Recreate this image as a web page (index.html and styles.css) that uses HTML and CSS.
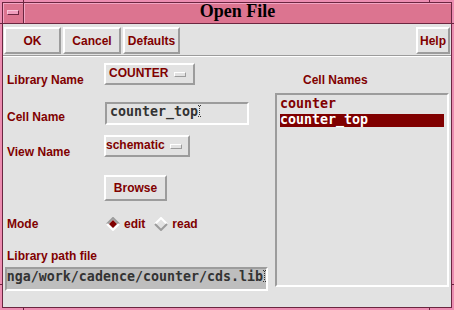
FILE: index.html
```html
<!DOCTYPE html>
<html>
<head>
<meta charset="utf-8">
<title>Open File</title>
<link rel="stylesheet" href="styles.css">
</head>
<body>
<div class="window">
  <span class="tick tick-top tick-a"></span>
  <span class="tick tick-top tick-b"></span>
  <span class="tick tick-bottom tick-a"></span>
  <span class="tick tick-bottom tick-b"></span>
  <span class="tick tick-left tick-c"></span>
  <span class="tick tick-left tick-d"></span>
  <span class="tick tick-right tick-c"></span>
  <span class="tick tick-right tick-d"></span>
  <div class="frame">
    <div class="titlebar">
      <div class="menu-btn"><span class="menu-glyph"></span></div>
      <div class="title">Open File</div>
    </div>
    <div class="client">
      <div class="toolbar">
        <button class="btn w-ok">OK</button>
        <button class="btn w-cancel">Cancel</button>
        <button class="btn w-defaults">Defaults</button>
        <button class="btn w-help">Help</button>
      </div>
      <div class="separator"></div>
      <div class="form">
        <div class="left">
          <div class="row row-lib">
            <div class="label">Library Name</div>
            <div class="option w-lib"><span class="opt-text">COUNTER</span><span class="opt-ind"></span></div>
          </div>
          <div class="row row-cell">
            <div class="label">Cell Name</div>
            <div class="textfield"><span class="tf-text">counter_top</span><svg class="cursor" width="3" height="12" viewBox="0 0 3 12"><path d="M0 0h1M2 0h1M1 1h1M1 3h1M1 5h1M1 7h1M1 9h1M0 11h1M2 11h1" stroke="#333" stroke-width="1" transform="translate(0 0.5)"/></svg></div>
          </div>
          <div class="row row-view">
            <div class="label">View Name</div>
            <div class="option w-view"><span class="opt-text">schematic</span><span class="opt-ind"></span></div>
          </div>
          <div class="row row-browse">
            <div class="label"></div>
            <button class="btn w-browse">Browse</button>
          </div>
          <div class="row row-mode">
            <div class="label">Mode</div>
            <div class="radios">
              <span class="radio radio-edit"><svg width="14" height="14" viewBox="0 0 14 14"><polyline points="1,7 7,1 13,7" fill="none" stroke="#9c9c9c" stroke-width="2"/><polyline points="1,7 7,13 13,7" fill="none" stroke="#ffffff" stroke-width="2"/><polygon points="7,3 11,7 7,11 3,7" fill="#800000"/></svg>edit</span>
              <span class="radio radio-read"><svg width="14" height="14" viewBox="0 0 14 14"><polyline points="1,7 7,1 13,7" fill="none" stroke="#ffffff" stroke-width="2"/><polyline points="1,7 7,13 13,7" fill="none" stroke="#9c9c9c" stroke-width="2"/></svg>read</span>
            </div>
          </div>
          <div class="path-label">Library path file</div>
          <div class="pathfield"><span class="path-text">/home/anga/work/cadence/counter/cds.lib</span><svg class="cursor" width="3" height="12" viewBox="0 0 3 12"><path d="M0 0h1M2 0h1M1 1h1M1 3h1M1 5h1M1 7h1M1 9h1M0 11h1M2 11h1" stroke="#333" stroke-width="1" transform="translate(0 0.5)"/></svg></div>
        </div>
        <div class="right">
          <div class="list-label">Cell Names</div>
          <div class="list">
            <div class="item">counter</div>
            <div class="item selected">counter_top</div>
          </div>
        </div>
      </div>
    </div>
  </div>
</div>
</body>
</html>
```

FILE: styles.css
```css
* {
  box-sizing: border-box;
  margin: 0;
  padding: 0;
}

html, body {
  width: 454px;
  height: 310px;
  overflow: hidden;
  background: #ec8db1;
}

body {
  font-family: "Liberation Sans", Arial, sans-serif;
  font-weight: bold;
  font-size: 12px;
  color: #800000;
}

.window {
  position: relative;
  width: 454px;
  height: 310px;
  padding: 2px;
  background: #ec8db1;
}

.tick {
  position: absolute;
  background: #6b2640;
}
.tick-top, .tick-bottom { width: 1px; height: 2px; }
.tick-top { top: 0; }
.tick-bottom { bottom: 0; }
.tick-a { left: 23px; }
.tick-b { left: 429px; }
.tick-left, .tick-right { width: 2px; height: 1px; }
.tick-left { left: 0; }
.tick-right { right: 0; }
.tick-c { top: 23px; }
.tick-d { top: 284px; }

.frame {
  width: 450px;
  height: 306px;
  border: 1px solid #6b2640;
  display: flex;
  flex-direction: column;
  background: #e2e2e2;
}

.titlebar {
  height: 21px;
  display: flex;
  border-bottom: 1px solid #6b2640;
  background: #dc7490;
}

.menu-btn {
  width: 21px;
  height: 20px;
  border-right: 1px solid #6b2640;
  box-shadow: inset 1px 1px 0 #f3a6c4;
  padding: 7px 0 0 4px;
}

.menu-glyph {
  display: block;
  width: 12px;
  height: 5px;
  background: #ef9cbc;
  border: 1px solid;
  border-color: #f8c4d8 #6b2640 #6b2640 #f8c4d8;
}

.title {
  flex: 1;
  height: 20px;
  box-shadow: inset 1px 1px 0 #f3a6c4;
  font-family: "Liberation Serif", "Times New Roman", serif;
  font-weight: bold;
  font-size: 18px;
  line-height: 17px;
  color: #000;
  text-align: center;
}

.client {
  flex: 1;
  display: flex;
  flex-direction: column;
}

.toolbar {
  display: flex;
  padding: 3px 1px 0 1px;
}

.btn {
  height: 27px;
  border: 2px solid;
  border-color: #ffffff #9c9c9c #9c9c9c #ffffff;
  background: #e2e2e2;
  font-family: "Liberation Sans", Arial, sans-serif;
  font-weight: bold;
  font-size: 12px;
  color: #800000;
  text-align: center;
  padding: 0;
}

.w-ok { width: 57px; margin-right: 2px; }
.w-cancel { width: 58px; margin-right: 2px; }
.w-defaults { width: 57px; }
.w-help { width: 34px; margin-left: auto; }
.w-browse { width: 63px; height: 26px; }

.separator {
  margin-top: 1px;
  height: 2px;
  border-top: 1px solid #9c9c9c;
  border-bottom: 1px solid #ffffff;
}

.form {
  display: flex;
}

.left {
  width: 263px;
  margin-left: 2px;
  display: flex;
  flex-direction: column;
}

.row {
  display: flex;
  align-items: flex-start;
}

.label {
  width: 99px;
  padding-left: 2px;
  line-height: 14px;
  flex-shrink: 0;
}

.row-lib { margin-top: 6px; }
.row-lib .label { margin-top: 10px; }
.row-cell { margin-top: 15px; }
.row-cell .label { margin-top: 8px; }
.row-view { margin-top: 10px; }
.row-view .label { margin-top: 10px; }
.row-browse { margin-top: 16px; }
.row-mode { margin-top: 16px; }

.option {
  height: 22px;
  border: 2px solid;
  border-color: #ffffff #9c9c9c #9c9c9c #ffffff;
  display: flex;
  align-items: flex-start;
}

.opt-text {
  line-height: 14px;
  margin-top: 1px;
}

.opt-ind {
  align-self: center;
  margin-left: auto;
  width: 12px;
  height: 5px;
  border: 1px solid;
  border-color: #ffffff #9c9c9c #9c9c9c #ffffff;
}

.w-lib { width: 91px; padding-left: 3px; }
.w-lib .opt-ind { margin-right: 7px; }
.w-view { width: 86px; padding-left: 0; }
.w-view .opt-ind { margin-right: 6px; }

.textfield {
  width: 144px;
  height: 23px;
  margin-left: 1px;
  border: 2px solid;
  border-color: #9c9c9c #ffffff #ffffff #9c9c9c;
  padding-left: 3px;
  display: flex;
  align-items: flex-start;
}

.tf-text, .path-text, .item {
  font-family: "DejaVu Sans Mono", "Liberation Mono", monospace;
  font-weight: bold;
  font-size: 13.3px;
}

.tf-text, .path-text {
  line-height: 15px;
  color: #333333;
  white-space: nowrap;
}

.cursor {
  display: block;
  flex-shrink: 0;
  margin-top: 1px;
}

.radios {
  display: flex;
  align-items: flex-start;
  padding-left: 2px;
  line-height: 14px;
}

.radio {
  display: flex;
  align-items: flex-start;
}

.radio svg {
  display: block;
  margin-right: 4px;
}

.radio-edit { margin-right: 9px; }

.path-label {
  margin-top: 18px;
  padding-left: 2px;
  line-height: 14px;
}

.pathfield {
  margin-top: 4px;
  width: 263px;
  height: 24px;
  background: #bebebe;
  border: 2px solid;
  border-color: #9c9c9c #ffffff #ffffff #9c9c9c;
  display: flex;
  justify-content: flex-end;
  align-items: flex-start;
  overflow: hidden;
  padding-right: 0;
}

.right {
  width: 174px;
  margin-left: 7px;
  display: flex;
  flex-direction: column;
}

.list-label {
  margin-top: 16px;
  padding-left: 28px;
  line-height: 14px;
}

.list {
  margin-top: 6px;
  height: 194px;
  border: 2px solid;
  border-color: #9c9c9c #ffffff #ffffff #9c9c9c;
  padding: 3px 3px 0 3px;
}

.item {
  height: 13px;
  line-height: 11px;
  margin-bottom: 3px;
  color: #800000;
  white-space: nowrap;
}

.item.selected {
  background: #800000;
  color: #ffffff;
}
```
